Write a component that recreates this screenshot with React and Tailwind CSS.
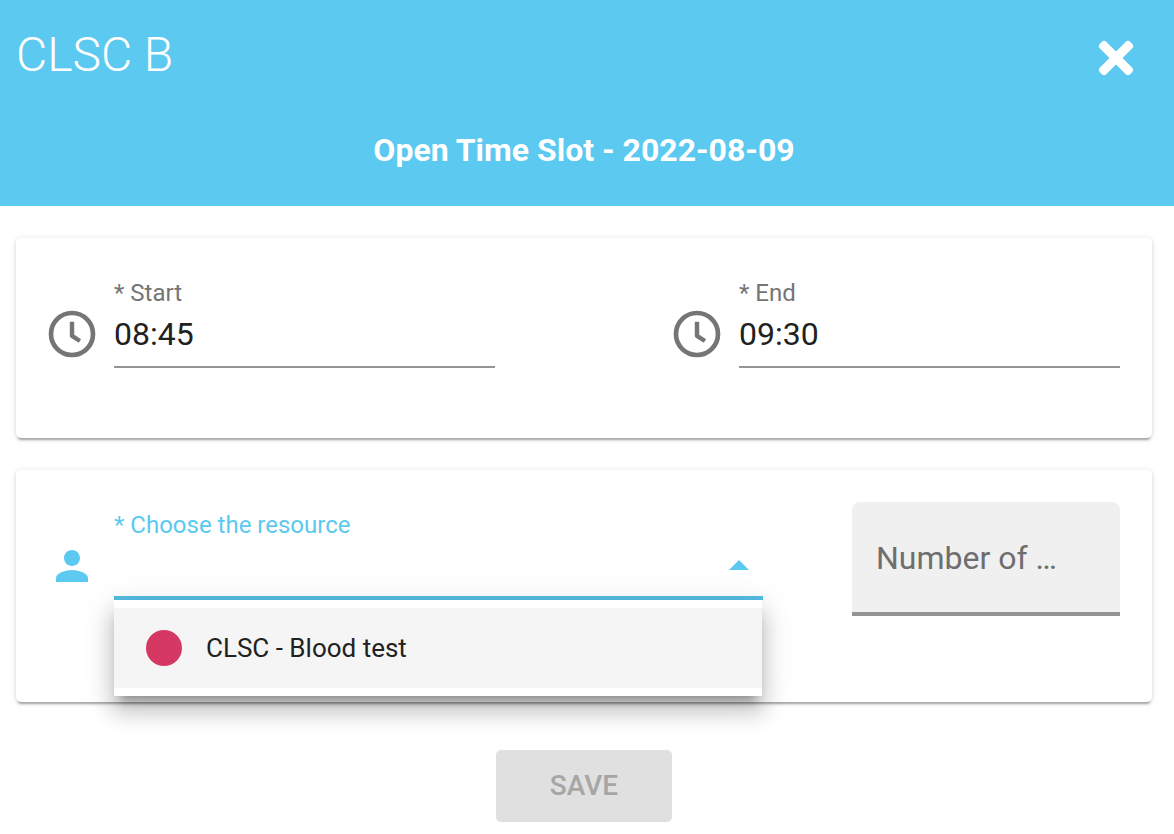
import React from "react";
import { FaTimes } from "react-icons/fa";

const ClockIcon = () => (
  <svg viewBox="0 0 24 24" className="w-14 h-14 shrink-0 mt-[27px] fill-none stroke-[#757575]">
    <circle cx="12" cy="12" r="9" strokeWidth="2" />
    <path d="M12 6.8V12.8L15.4 15" strokeWidth="1.9" strokeLinejoin="round" />
  </svg>
);

const PersonIcon = () => (
  <svg viewBox="0 0 24 24" className="w-12 h-12 shrink-0 mt-[31px] mx-1 fill-[#5bc9f0]">
    <path d="M12 12c2.21 0 4-1.79 4-4s-1.79-4-4-4-4 1.79-4 4 1.79 4 4 4zm0 2c-2.67 0-8 1.34-8 4v2h16v-2c0-2.66-5.33-4-8-4z" />
  </svg>
);

const TimeField = ({ label, value }) => (
  <div className="flex gap-[14px]">
    <ClockIcon />
    <div className="w-[381px] border-b-2 border-[#949494] pb-3">
      <div className="h-7 leading-7 text-2xl text-[#757575]">{label}</div>
      <div className="mt-[7px] h-10 leading-10 text-[32px] text-[#212121]">{value}</div>
    </div>
  </div>
);

const App = () => {
  return (
    <div className="w-full h-[834px] bg-white overflow-hidden font-['Roboto',sans-serif]">
      {/* Header */}
      <header className="h-[206px] bg-[#5bc9f0] text-white flex flex-col">
        <div className="flex justify-between items-start pl-4 pr-[33px]">
          <h1 className="mt-[27px] text-5xl leading-[56px] font-light">CLSC B</h1>
          <FaTimes className="mt-[33px] text-[50px]" />
        </div>
        <h2 className="mt-[47px] w-[1168px] text-center text-[32px] leading-10 font-bold">
          Open Time Slot - 2022-08-09
        </h2>
      </header>

      <main className="w-[1168px] px-4 pt-8">
        {/* Start / End */}
        <section className="h-[200px] bg-white rounded-[5px] pt-[41px] pl-7 pr-8 flex justify-between items-start shadow-[0_4px_2px_-2px_rgba(0,0,0,0.25),0_2px_4px_rgba(0,0,0,0.12),0_0_6px_rgba(0,0,0,0.08)]">
          <TimeField label="* Start" value="08:45" />
          <TimeField label="* End" value="09:30" />
        </section>

        {/* Resource */}
        <section className="mt-8 h-[232px] bg-white rounded-[5px] pl-7 pr-8 flex justify-between items-start shadow-[0_4px_2px_-2px_rgba(0,0,0,0.25),0_2px_4px_rgba(0,0,0,0.12),0_0_6px_rgba(0,0,0,0.08)]">
          <div className="flex gap-[14px] pt-[41px] items-start">
            <PersonIcon />
            <div className="relative w-[649px] h-[89px] border-b-4 border-[#54bfe3]">
              <div className="h-7 leading-7 text-2xl text-[#5bc9f0]">* Choose the resource</div>
              <svg viewBox="0 0 20 10" className="absolute right-[14px] top-[49px] w-5 h-[10px] fill-[#5bc9f0]">
                <path d="M10 0L20 10H0z" />
              </svg>
              <div className="absolute left-0 top-full mt-1 w-[648px] bg-white py-2 shadow-[0_10px_10px_-6px_rgba(0,0,0,0.3),0_16px_20px_2px_rgba(0,0,0,0.16),0_6px_28px_4px_rgba(0,0,0,0.1)]">
                <div className="h-20 bg-[#f5f5f5] flex items-center gap-6 pl-8">
                  <span className="w-9 h-9 rounded-full bg-[#d63864]" />
                  <span className="text-[26px] text-[#212121]">CLSC - Blood test</span>
                </div>
              </div>
            </div>
          </div>
          <div className="mt-8 w-[268px] h-[114px] bg-[#f0f0f0] rounded-t-lg border-b-4 border-[#949494] pl-6 pt-9">
            <span className="block text-[32px] leading-10 text-[#6e6e6e]">Number of …</span>
          </div>
        </section>

        <div className="mt-12 flex justify-center">
          <button className="w-[176px] h-[72px] rounded-[5px] bg-[#e0e0e0] text-[28px] font-medium text-[#a6a6a6]">
            SAVE
          </button>
        </div>
      </main>
    </div>
  );
};

export default App;
